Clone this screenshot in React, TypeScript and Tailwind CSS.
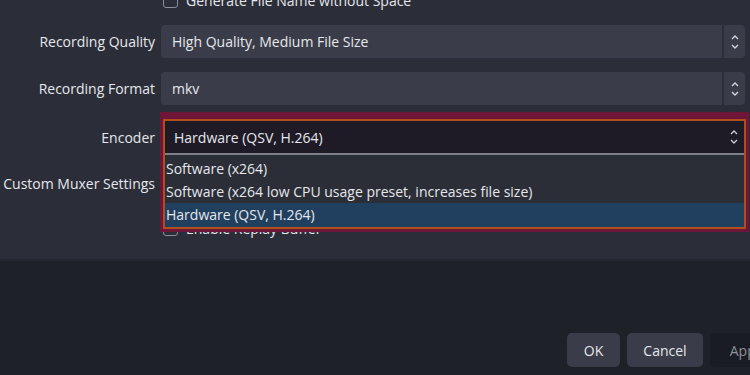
import React from "react";

const font = { fontFamily: '"Open Sans", "Noto Sans", sans-serif' };

function Spinner({ dim }: { dim?: boolean }) {
  return (
    <svg width="10" height="18" viewBox="0 0 10 18" fill="none">
      <path d="M2 6 L5 3 L8 6" stroke={dim ? "#c9cad2" : "#d4d5dc"} strokeWidth="1.4" />
      <path d="M2 12 L5 15 L8 12" stroke={dim ? "#c9cad2" : "#d4d5dc"} strokeWidth="1.4" />
    </svg>
  );
}

function Combo({ value }: { value: string }) {
  return (
    <div className="flex h-[33px] w-[584px] rounded-[4px] bg-[#3a3d49]">
      <div className="flex flex-1 items-center pl-[11px] text-[14px] text-[#e6e7ec]">{value}</div>
      <div className="w-[2px] bg-[#2c2f39]" />
      <div className="flex w-[21px] items-center justify-center">
        <Spinner />
      </div>
    </div>
  );
}

function Checkbox() {
  return <div className="h-[15px] w-[15px] rounded-[3px] border border-[#8b8e98]" />;
}

export default function App() {
  return (
    <div className="h-[375px] w-[750px] overflow-hidden bg-[#1f2129]" style={font}>
      <div className="relative h-[259px] overflow-hidden bg-[#2b2e38]">
        <div className="mt-[-12px] flex flex-col">
          {/* checkbox row, mostly cut off */}
          <div className="flex h-[24px] items-center gap-[8px] pl-[163px] text-[14px] text-[#e6e7ec]">
            <Checkbox />
            <span>Generate File Name without Space</span>
          </div>

          <div className="mt-[13px] flex items-center gap-[6px]">
            <div className="w-[155px] text-right text-[14px] text-[#e6e7ec]">Recording Quality</div>
            <Combo value="High Quality, Medium File Size" />
          </div>

          <div className="mt-[14px] flex items-center gap-[6px]">
            <div className="w-[155px] text-right text-[14px] text-[#e6e7ec]">Recording Format</div>
            <Combo value="mkv" />
          </div>

          <div className="mt-[16px] flex items-center gap-[6px]">
            <div className="w-[155px] text-right text-[14px] text-[#e6e7ec]">Encoder</div>
            <div className="h-[33px] w-[584px]" />
          </div>

          <div className="mt-[14px] flex items-center gap-[6px]">
            <div className="w-[155px] text-right text-[14px] text-[#e6e7ec]">Custom Muxer Settings</div>
            <div className="h-[31px] w-[584px] rounded-[4px] bg-[#3a3d49]" />
          </div>

          <div className="mt-[19px] flex h-[20px] items-center gap-[8px] pl-[163px] text-[14px] text-[#e6e7ec]">
            <Checkbox />
            <span>Enable Replay Buffer</span>
          </div>
        </div>

        {/* open encoder dropdown with annotation frame */}
        <div className="absolute left-[160px] top-[112px] h-[120px] w-[589px] border-[3px] border-t-[7px] border-[#6f1537]">
          <div className="flex h-full flex-col border-2 border-[#b04f1e]">
            <div className="flex h-[32px] items-center justify-between bg-[#1e1b27] pl-[9px] pr-[5px] text-[14px] text-[#e6e7ec]">
              <span>Hardware (QSV, H.264)</span>
              <Spinner dim />
            </div>
            <div className="h-[2px] bg-[#7e8089]" />
            <div className="flex flex-1 flex-col bg-[#2b2e37] pt-[2px] text-[14px] leading-[23px] text-[#e6e7ec]">
              <div className="pl-[1px]">Software (x264)</div>
              <div className="pl-[1px]">Software (x264 low CPU usage preset, increases file size)</div>
              <div className="flex-1 bg-[#21405f] pl-[1px]">Hardware (QSV, H.264)</div>
            </div>
          </div>
        </div>
      </div>

      <div className="h-[2px] bg-[#25272f]" />

      <div className="mr-[-36px] flex justify-end gap-[7px] pt-[72px] text-[14px]">
        <button className="h-[34px] w-[53px] rounded-[5px] bg-[#3a3d49] text-[#e6e7ec]">OK</button>
        <button className="h-[34px] w-[76px] rounded-[5px] bg-[#3a3d49] text-[#e6e7ec]">Cancel</button>
        <button className="h-[34px] w-[76px] rounded-[5px] bg-[#1a1c23] text-[#8e9097]">Apply</button>
      </div>
    </div>
  );
}
